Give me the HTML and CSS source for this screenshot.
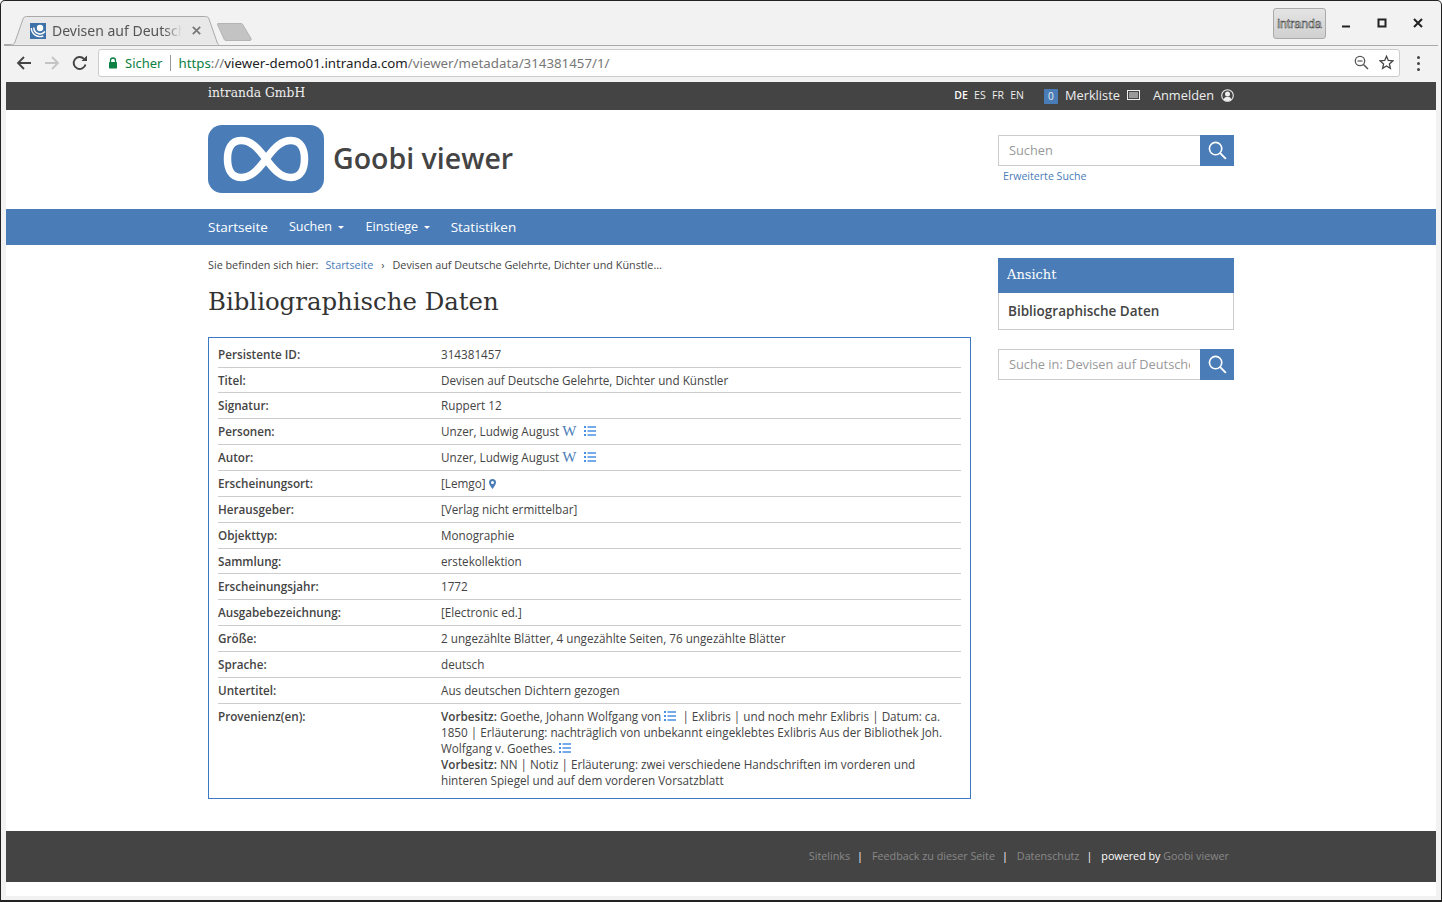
FILE: index.html
```html
<!DOCTYPE html>
<html lang="de">
<head>
    <meta charset="UTF-8">
    <title>Devisen auf Deutsche Gelehrte</title>
    <link rel="stylesheet" href="styles.css">
</head>
<body>
<svg class="icon-defs" width="0" height="0">
    <symbol id="list" viewBox="0 0 12 10">
        <path d="M0 0h2v2H0zM0 4h2v2H0zM0 8h2v2H0zM3.500 .2H12v1.600H3.500zM3.500 4.200H12v1.600H3.500zM3.500 8.200H12v1.600H3.500z"/>
    </symbol>
    <symbol id="search" viewBox="0 0 20 20">
        <circle cx="8" cy="8" r="6.500" fill="none" stroke="#fff" stroke-width="1.700"/>
        <path d="M12.800 12.800l6 6" fill="none" stroke="#fff" stroke-width="2"/>
    </symbol>
</svg>

<div class="window">
    <!-- browser chrome -->
    <div class="tabstrip">
        <div class="tab">
            <svg class="tab-shape" width="222" height="29" viewBox="0 0 222 29">
                <path d="M0 28.500h7.500c2 0 3-1 3.500-2.500L19 3c.6-1.600 1.500-2.500 3.500-2.500h179c2 0 3 .9 3.500 2.500l8 23c.5 1.500 1 2.500 2 2.500" fill="#e8e8e8" stroke="#aaa"/>
            </svg>
            <svg class="favicon" width="16" height="16" viewBox="0 0 16 16">
                <rect width="16" height="16" fill="#3f72a8"/>
                <circle cx="10" cy="5" r="3.200" fill="#fff"/>
                <path d="M3.800 4.500a6.300 6.300 0 0 0 11.200 4" fill="none" stroke="#fff" stroke-width="1.500"/>
                <path d="M1.300 5a8.800 8.800 0 0 0 12 8" fill="none" stroke="#fff" stroke-width="1.400"/>
            </svg>
            <span class="tab-title">Devisen auf Deutsche</span>
            <svg class="tab-close" width="9" height="9" viewBox="0 0 9 9"><path d="M.8.8l7.400 7.400M8.200.8L.8 8.200" stroke="#777" stroke-width="1.700"/></svg>
        </div>
        <svg class="new-tab" width="36" height="20" viewBox="0 0 36 20">
            <path d="M1 1.500h23c1 0 1.500.5 2 1.500l8 13.500c.5 1 0 2-1 2H9c-1 0-1.500-.5-2-1.500L.5 2.500C.2 2 .4 1.500 1 1.500z" fill="#c3c3c3" stroke="#b4b4b4"/>
        </svg>
        <div class="spacer"></div>
        <div class="profile">intranda</div>
        <div class="win-buttons">
            <svg width="10" height="10" viewBox="0 0 10 10"><path d="M1 8.500h8" stroke="#222" stroke-width="2"/></svg>
            <svg width="10" height="10" viewBox="0 0 10 10"><rect x="1.500" y="1.500" width="7" height="7" fill="none" stroke="#222" stroke-width="2"/></svg>
            <svg width="10" height="10" viewBox="0 0 10 10"><path d="M1 1l8 8M9 1l-8 8" stroke="#222" stroke-width="2"/></svg>
        </div>
    </div>
    <div class="toolbar">
        <svg class="nav-btn" width="16" height="16" viewBox="0 0 16 16"><path d="M15 8H2M8 2L2 8l6 6" fill="none" stroke="#444" stroke-width="1.800"/></svg>
        <svg class="nav-btn" width="16" height="16" viewBox="0 0 16 16"><path d="M1 8h13M8 2l6 6-6 6" fill="none" stroke="#c4c4c4" stroke-width="1.800"/></svg>
        <svg class="nav-btn" width="16" height="16" viewBox="0 0 16 16"><path d="M13.500 9.500A6 6 0 1 1 12 3.800" fill="none" stroke="#444" stroke-width="1.900"/><path d="M9.500 6H15V.5z" fill="#444"/></svg>
        <div class="omnibox">
            <svg class="lock" width="10" height="12" viewBox="0 0 10 12"><path d="M2.500 5V3.500a2.500 2.500 0 0 1 5 0V5" fill="none" stroke="#0b8043" stroke-width="1.300"/><rect x="1" y="5" width="8" height="6.500" rx=".7" fill="#0b8043"/></svg>
            <span class="secure">Sicher</span>
            <span class="omni-sep"></span>
            <span class="url"><span class="url-scheme">https</span><span class="url-path">://</span><span class="url-host">viewer-demo01.intranda.com</span><span class="url-path">/viewer/metadata/314381457/1/</span></span>
            <div class="spacer"></div>
            <svg class="zoom-icon" width="15" height="15" viewBox="0 0 15 15"><circle cx="6" cy="6" r="4.700" fill="none" stroke="#555" stroke-width="1.300"/><path d="M9.500 9.500l4.500 4.500" stroke="#555" stroke-width="1.500"/><path d="M3.500 6h5" stroke="#555" stroke-width="1.200"/></svg>
            <svg class="star-icon" width="15" height="15" viewBox="0 0 15 15"><path d="M7.500 1.300l1.800 4.200 4.500.4-3.400 3 1 4.400-3.900-2.300-3.900 2.300 1-4.400-3.400-3 4.500-.4z" fill="none" stroke="#444" stroke-width="1.300"/></svg>
        </div>
        <div class="menu-dots"><i></i><i></i><i></i></div>
    </div>

    <!-- page -->
    <div class="page">
        <div class="topbar">
            <div class="container topbar-inner">
                <span class="company">intranda GmbH</span>
                <div class="topbar-right">
                    <span class="langs"><b>DE</b><span>ES</span><span>FR</span><span>EN</span></span>
                    <span class="badge">0</span>
                    <span class="top-link">Merkliste</span>
                    <svg class="bar-icon" width="13" height="10" viewBox="0 0 13 10"><rect x=".5" y=".5" width="12" height="9" fill="none" stroke="#eee"/><path d="M2 3h9M2 5h9M2 7h9" stroke="#eee"/></svg>
                    <span class="top-link login">Anmelden</span>
                    <svg class="user-icon" width="13" height="13" viewBox="0 0 13 13"><circle cx="6.500" cy="6.500" r="5.800" fill="none" stroke="#eee" stroke-width="1.100"/><circle cx="6.500" cy="5" r="2.500" fill="#eee"/><path d="M2.500 10.500c.8-2 2.200-2.700 4-2.700s3.200.7 4 2.700a5.500 5.500 0 0 1-8 0z" fill="#eee"/></svg>
                </div>
            </div>
        </div>

        <header class="container site-header">
            <div class="logo">
                <svg width="116" height="68" viewBox="0 0 116 68">
                    <rect width="116" height="68" rx="14" fill="#4a7db8"/>
                    <path d="M58 34C50 23 43 15.500 33 15.500 23 15.500 19.500 24.500 19.500 34S23 52.500 33 52.500c10 0 17-7.500 25-18.500s15-18.500 25-18.500c10 0 13.500 9 13.500 18.500S93 52.500 83 52.500C73 52.500 66 45 58 34z" fill="none" stroke="#fff" stroke-width="7.500"/>
                </svg>
            </div>
            <div class="site-title">Goobi viewer</div>
            <div class="spacer"></div>
            <div class="header-search">
                <div class="search-box">
                    <span class="search-input">Suchen</span>
                    <span class="search-btn"><svg width="19" height="19"><use href="#search"/></svg></span>
                </div>
                <a class="adv-search">Erweiterte Suche</a>
            </div>
        </header>

        <nav class="main-nav">
            <div class="container nav-inner">
                <a>Startseite</a>
                <a class="raised">Suchen<i class="caret"></i></a>
                <a class="raised">Einstiege<i class="caret"></i></a>
                <a>Statistiken</a>
            </div>
        </nav>

        <div class="container content">
            <main class="main-col">
                <div class="breadcrumb">
                    <span>Sie befinden sich hier:</span>
                    <a>Startseite</a>
                    <span class="crumb-sep">›</span>
                    <span>Devisen auf Deutsche Gelehrte, Dichter und Künstle...</span>
                </div>
                <h1>Bibliographische Daten</h1>
                <div class="meta-box">
                    <div class="meta-row"><div class="meta-label">Persistente ID:</div><div class="meta-value">314381457</div></div>
                    <div class="meta-row"><div class="meta-label">Titel:</div><div class="meta-value">Devisen auf Deutsche Gelehrte, Dichter und Künstler</div></div>
                    <div class="meta-row"><div class="meta-label">Signatur:</div><div class="meta-value">Ruppert 12</div></div>
                    <div class="meta-row"><div class="meta-label">Personen:</div><div class="meta-value">Unzer, Ludwig August <span class="wiki">W</span> <svg class="list-icon gap"><use href="#list"/></svg></div></div>
                    <div class="meta-row"><div class="meta-label">Autor:</div><div class="meta-value">Unzer, Ludwig August <span class="wiki">W</span> <svg class="list-icon gap"><use href="#list"/></svg></div></div>
                    <div class="meta-row"><div class="meta-label">Erscheinungsort:</div><div class="meta-value">[Lemgo] <svg class="pin" width="7" height="10" viewBox="0 0 7 10"><path fill-rule="evenodd" d="M3.500 0A3.500 3.500 0 0 0 0 3.500C0 5.500 2.500 8.500 3.500 10 4.500 8.500 7 5.500 7 3.500A3.500 3.500 0 0 0 3.500 0zm0 2a1.500 1.500 0 1 1 0 3 1.500 1.500 0 0 1 0-3z" fill="#4a7db8"/></svg></div></div>
                    <div class="meta-row"><div class="meta-label">Herausgeber:</div><div class="meta-value">[Verlag nicht ermittelbar]</div></div>
                    <div class="meta-row"><div class="meta-label">Objekttyp:</div><div class="meta-value">Monographie</div></div>
                    <div class="meta-row"><div class="meta-label">Sammlung:</div><div class="meta-value">erstekollektion</div></div>
                    <div class="meta-row"><div class="meta-label">Erscheinungsjahr:</div><div class="meta-value">1772</div></div>
                    <div class="meta-row"><div class="meta-label">Ausgabebezeichnung:</div><div class="meta-value">[Electronic ed.]</div></div>
                    <div class="meta-row"><div class="meta-label">Größe:</div><div class="meta-value">2 ungezählte Blätter, 4 ungezählte Seiten, 76 ungezählte Blätter</div></div>
                    <div class="meta-row"><div class="meta-label">Sprache:</div><div class="meta-value">deutsch</div></div>
                    <div class="meta-row"><div class="meta-label">Untertitel:</div><div class="meta-value">Aus deutschen Dichtern gezogen</div></div>
                    <div class="meta-row"><div class="meta-label">Provenienz(en):</div><div class="meta-value"><b>Vorbesitz:</b> Goethe, Johann Wolfgang von <svg class="list-icon"><use href="#list"/></svg> &nbsp;| Exlibris | und noch mehr Exlibris | Datum: ca. 1850 | Erläuterung: nachträglich von unbekannt eingeklebtes Exlibris Aus der Bibliothek Joh. Wolfgang v. Goethes. <svg class="list-icon"><use href="#list"/></svg><br><b>Vorbesitz:</b> NN | Notiz | Erläuterung: zwei verschiedene Handschriften im vorderen und hinteren Spiegel und auf dem vorderen Vorsatzblatt</div></div>
                </div>
            </main>
            <aside class="side-col">
                <div class="side-widget">
                    <div class="side-title">Ansicht</div>
                    <div class="side-body">Bibliographische Daten</div>
                </div>
                <div class="search-box">
                    <span class="search-input">Suche in: Devisen auf Deutsche Gelehrte</span>
                    <span class="search-btn"><svg width="19" height="19"><use href="#search"/></svg></span>
                </div>
            </aside>
        </div>

        <footer class="site-footer">
            <div class="container footer-inner">
                <a>Sitelinks</a><span class="foot-sep">|</span>
                <a>Feedback zu dieser Seite</a><span class="foot-sep">|</span>
                <a>Datenschutz</a><span class="foot-sep">|</span>
                <span class="powered">powered by <a>Goobi viewer</a></span>
            </div>
        </footer>
    </div>
</div>
</body>
</html>
```

FILE: styles.css
```css
html, body {
    margin: 0;
    height: 100%;
    overflow: hidden;
}

body {
    font-family: "Open Sans", "Liberation Sans", sans-serif;
    font-size: 11.700px;
    color: #444;
    background-color: #fff;
}

.icon-defs {
    display: block;
}

.spacer {
    flex: 1;
}

/* browser chrome */
.window {
    box-sizing: border-box;
    width: 1442px;
    height: 902px;
    background-color: #f2f2f2;
    border: 1px solid #222;
    border-bottom-width: 2px;
    border-radius: 5px 5px 0 0;
    display: flex;
    flex-direction: column;
}

.tabstrip {
    height: 44px;
    flex: none;
    display: flex;
    align-items: flex-start;
    font-family: "Noto Sans", sans-serif;
}

.tab {
    position: relative;
    box-sizing: border-box;
    width: 210px;
    height: 29px;
    margin: 15px 0 0 3px;
    display: flex;
    align-items: center;
    padding: 0 0 0 26px;
}

.tab-shape {
    position: absolute;
    left: 0;
    top: 0;
}

.favicon {
    position: relative;
    margin-right: 6px;
    flex: none;
}

.tab-title {
    position: relative;
    width: 130px;
    overflow: hidden;
    white-space: nowrap;
    font-size: 14px;
    color: #555;
    -webkit-mask-image: linear-gradient(to right, #000 112px, transparent 130px);
    mask-image: linear-gradient(to right, #000 112px, transparent 130px);
}

.tab-close {
    position: relative;
    margin-left: 10px;
    flex: none;
}

.new-tab {
    margin: 21px 0 0 3px;
}

.profile {
    box-sizing: border-box;
    width: 53px;
    height: 31px;
    margin: 7px 15px 0 0;
    background: linear-gradient(#e4e4e4, #d0d0d0);
    border: 1px solid #aaa;
    border-radius: 3px;
    font-family: "Liberation Sans", sans-serif;
    font-size: 12.300px;
    line-height: 30px;
    text-align: center;
    color: #e8e8e8;
    -webkit-text-stroke: 0.5px #333;
}

.win-buttons {
    display: flex;
    gap: 26px;
    margin: 17px 18px 0 0;
}

.toolbar {
    height: 37px;
    flex: none;
    margin: 0 3px 0 3px;
    box-sizing: border-box;
    border-top: 1px solid #aaa;
    background-color: #f2f2f2;
    display: flex;
    align-items: center;
    padding: 0 18px 2px 12px;
    font-family: "Noto Sans", sans-serif;
}

.nav-btn {
    margin-right: 12px;
}

.omnibox {
    box-sizing: border-box;
    flex: 1;
    height: 28px;
    margin-left: -2px;
    background-color: #fff;
    border: 1px solid #ccc;
    border-radius: 3px;
    display: flex;
    align-items: center;
    padding: 0 5px 1px 9px;
    font-size: 13.300px;
}

.lock {
    margin-right: 7px;
}

.secure {
    font-size: 13px;
    color: #0b8043;
}

.omni-sep {
    width: 1px;
    height: 16px;
    background-color: #999;
    margin: 0 7px 0 8px;
}

.url {
    white-space: nowrap;
}

.url-scheme {
    color: #0b8043;
}

.url-host {
    color: #222;
}

.url-path {
    color: #777;
}

.zoom-icon {
    margin-right: 10px;
}

.menu-dots {
    display: flex;
    flex-direction: column;
    gap: 3px;
    margin-left: 17px;
}

.menu-dots i {
    display: block;
    width: 3px;
    height: 3px;
    background-color: #444;
    border-radius: 50%;
}

/* page */
.page {
    flex: 1;
    margin: 0 5px 4px 5px;
    background-color: #fff;
    display: flex;
    flex-direction: column;
}

.container {
    width: 1026px;
    margin: 0 auto;
}

.topbar {
    height: 28px;
    flex: none;
    background-color: #444;
    color: #eee;
}

.topbar-inner {
    display: flex;
    justify-content: space-between;
}

.company {
    font-family: "DejaVu Serif", serif;
    font-size: 12.300px;
    line-height: 23px;
}

.topbar-right {
    display: flex;
    align-items: center;
    height: 26px;
    font-size: 12.800px;
}

.langs {
    display: flex;
    gap: 6.300px;
    font-size: 10.500px;
    margin-right: 20px;
}

.langs b {
    font-weight: 600;
    color: #fff;
}

.badge {
    box-sizing: border-box;
    width: 14px;
    height: 15px;
    margin-top: 3px;
    background-color: #4a7db8;
    border-radius: 1px;
    font-size: 10px;
    line-height: 15px;
    text-align: center;
    margin-right: 7px;
}

.bar-icon {
    margin-left: 7px;
}

.login {
    margin-left: 13px;
}

.user-icon {
    margin-left: 7px;
}

.site-header {
    height: 99px;
    flex: none;
    display: flex;
    align-items: flex-start;
}

.logo {
    margin-top: 15px;
    height: 68px;
}

.site-title {
    margin: 27px 0 0 9px;
    font-size: 28.500px;
    line-height: 42px;
    font-weight: 600;
    color: #444;
}

.header-search {
    margin-top: 25px;
}

.search-box {
    box-sizing: border-box;
    width: 236px;
    height: 31px;
    display: flex;
    border: 1px solid #ccc;
    border-right: none;
    background-color: #fff;
}

.search-input {
    flex: 1;
    min-width: 0;
    margin: 0 10px;
    overflow: hidden;
    white-space: nowrap;
    line-height: 29px;
    font-size: 12.800px;
    color: #999;
}

.search-btn {
    width: 34px;
    height: 31px;
    margin-top: -1px;
    flex: none;
    background-color: #4a7db8;
    display: flex;
    align-items: center;
    justify-content: center;
}

.adv-search {
    display: block;
    margin: 3px 0 0 5px;
    font-size: 10.600px;
    line-height: 15px;
    color: #4a7db8;
}

.main-nav {
    height: 36px;
    flex: none;
    background-color: #4a7db8;
    color: #fff;
    font-size: 13.500px;
}

.nav-inner {
    display: flex;
    gap: 21px;
    line-height: 37px;
}

.raised {
    font-size: 12.600px;
    line-height: 35px;
}

.raised + .raised {
    margin-left: 1px;
}

.caret {
    display: inline-block;
    margin-left: 5.500px;
    vertical-align: middle;
    border-top: 3.500px solid #fff;
    border-left: 3.500px solid transparent;
    border-right: 3.500px solid transparent;
}

.content {
    flex: 1;
    display: flex;
    justify-content: space-between;
}

.main-col {
    width: 763px;
}

.breadcrumb {
    display: flex;
    margin-top: 12px;
    font-size: 10.800px;
    line-height: 15px;
}

.breadcrumb a {
    color: #4a7db8;
    margin-left: 7px;
}

.crumb-sep {
    margin: 0 8px;
}

h1 {
    margin: 11px 0 16px;
    font-family: "DejaVu Serif", serif;
    font-size: 24.400px;
    line-height: 38px;
    font-weight: 400;
    color: #333;
}

.meta-box {
    border: 1px solid #3b79c3;
    padding: 3.700px 9px 5.800px;
}

.meta-row {
    display: flex;
    padding: 4px 0 4.860px;
    border-top: 1px solid #ccc;
    line-height: 16px;
}

.meta-row:first-child {
    border-top: none;
}

.meta-label {
    width: 223px;
    flex: none;
    font-weight: 600;
}

.meta-value {
    flex: 1;
}

.meta-value b {
    font-weight: 600;
}

.wiki {
    font-family: "Liberation Serif", serif;
    font-size: 15px;
    line-height: 1;
    color: #4a7db8;
}

.list-icon {
    width: 12px;
    height: 10px;
    fill: #4a90e2;
}

.list-icon.gap {
    margin-left: 5px;
}

.pin {
    vertical-align: -1px;
}

.side-col {
    width: 236px;
    padding-top: 13px;
}

.side-widget {
    margin-bottom: 19px;
}

.side-title {
    height: 35px;
    background-color: #4a7db8;
    color: #fff;
    padding-left: 9px;
    font-family: "DejaVu Serif", serif;
    font-size: 13px;
    line-height: 33px;
}

.side-body {
    height: 36px;
    border: 1px solid #ccc;
    border-top: none;
    padding-left: 9px;
    font-size: 13.500px;
    font-weight: 600;
    line-height: 37px;
}

.site-footer {
    height: 51px;
    flex: none;
    margin-bottom: 14px;
    background-color: #444;
    color: #fff;
    font-size: 10.750px;
}

.footer-inner {
    box-sizing: border-box;
    display: flex;
    justify-content: flex-end;
    padding-right: 5px;
    line-height: 50px;
}

.footer-inner a {
    color: #888;
}

.foot-sep {
    margin: 0 9px 0 7px;
}

.powered {
    white-space: pre;
}
```
